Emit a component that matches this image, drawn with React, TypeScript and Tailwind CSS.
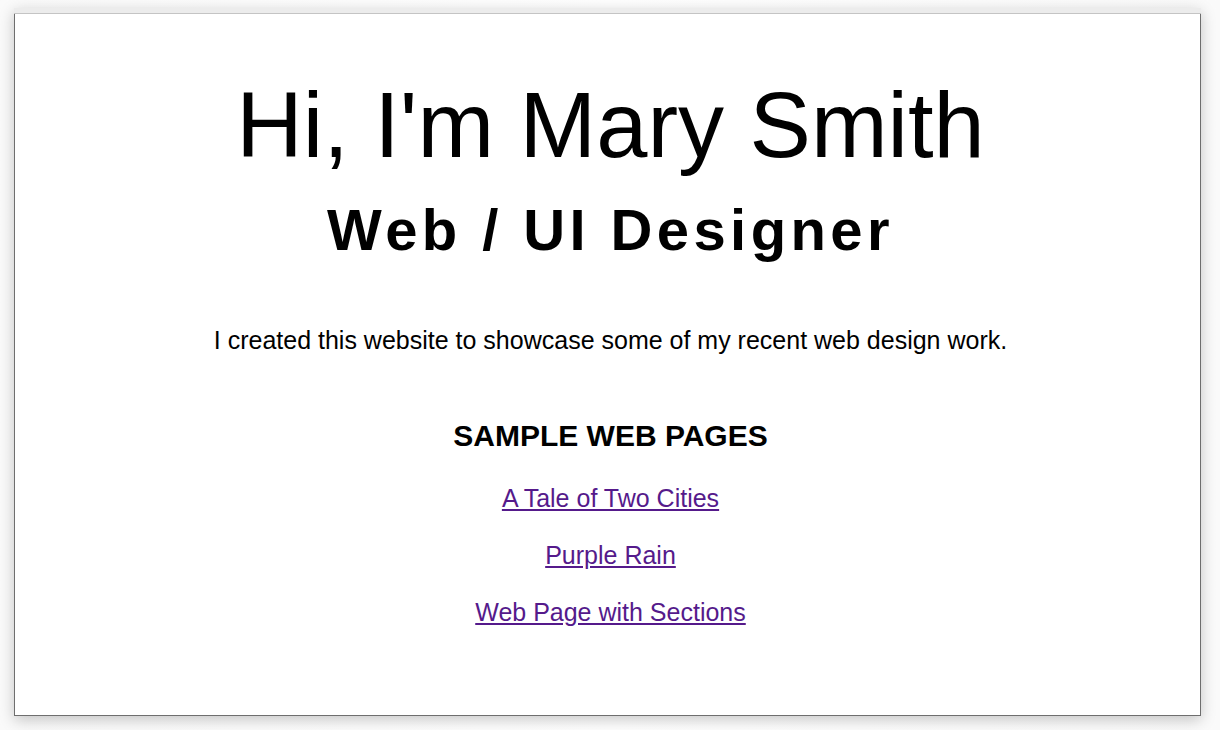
import React from 'react';

const links = ['A Tale of Two Cities', 'Purple Rain', 'Web Page with Sections'];

/**
 * Portfolio landing page, shown inside a plain browser-like frame.
 */
const App: React.FC = () => {
  return (
    <div
      className="w-[1220px] h-[730px] overflow-hidden bg-gradient-to-r from-[#fafafa] via-white to-[#fafafa] pt-[8px] pl-[14px]"
      style={{ fontFamily: '"Liberation Sans", Arial, sans-serif' }}
    >
      <div className="w-[1187px] h-[708px] flex flex-col shadow-[0_4px_14px_rgba(0,0,0,0.22)]">
        {/* top strip of the frame */}
        <div className="h-[6px] bg-[#ececec] border-b border-[#c4c4c4]" />

        <main className="flex-1 bg-white border-x border-b border-[#6e6e6e] pt-[65px] pl-[6px] flex flex-col items-center text-black">
          <h1 className="text-[92px] leading-none font-normal">Hi, I'm Mary Smith</h1>
          <h2 className="mt-[30px] text-[58px] leading-none font-bold tracking-[4.4px]">
            Web / UI Designer
          </h2>

          <p className="mt-[69px] text-[25px] leading-none">
            I created this website to showcase some of my recent web design work.
          </p>

          <h3 className="mt-[68px] text-[30px] leading-none font-bold">SAMPLE WEB PAGES</h3>

          <ul className="mt-[35px] flex flex-col items-center gap-[32px]">
            {links.map((label) => (
              <li key={label} className="text-[25px] leading-none">
                <a href="#" className="text-[#551a8b] underline">
                  {label}
                </a>
              </li>
            ))}
          </ul>
        </main>
      </div>
    </div>
  );
};

export default App;
